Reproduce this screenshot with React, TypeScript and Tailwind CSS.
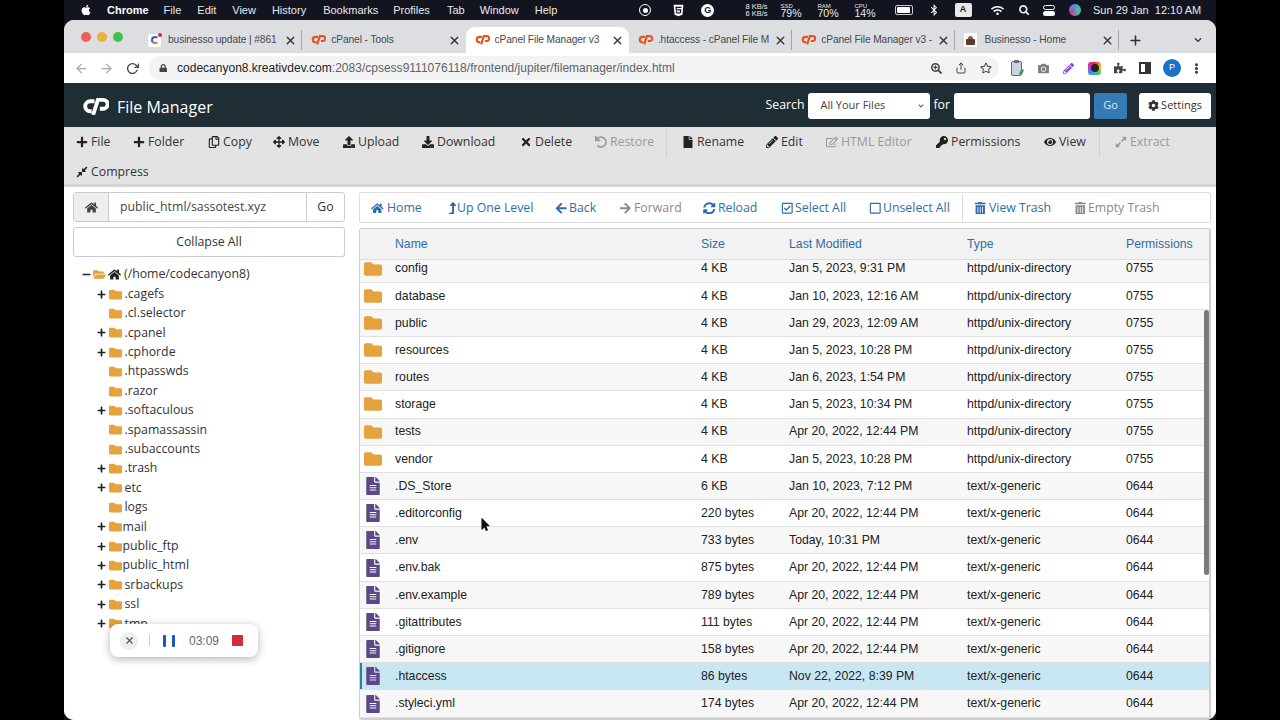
import React from "react";
import {
  FaPlus, FaRegCopy, FaArrowsAlt, FaUpload, FaDownload, FaTimes, FaUndo, FaFile, FaPencilAlt, FaRegEdit, FaKey, FaEye, FaExpandAlt, FaCompressAlt,
  FaHome, FaLevelUpAlt, FaArrowLeft, FaArrowRight, FaSyncAlt, FaRegCheckSquare, FaRegSquare, FaTrashAlt, FaFolder, FaFolderOpen, FaFileAlt, FaCog, FaApple, FaMinus, FaRegStar, FaPuzzlePiece, FaCamera, FaLock, FaBluetoothB, FaWifi, FaSearch, FaEllipsisV, FaChevronDown, FaHtml5, FaMousePointer, FaSearchPlus,
} from "react-icons/fa";
import { FiShare, FiX, FiPlus, FiArrowLeft, FiArrowRight, FiRotateCw } from "react-icons/fi";

const CP = ({ c = "#e5531f", s = 15 }: { c?: string; s?: number }) => (
  <svg width={s} height={(s * 18) / 28} viewBox="0 0 28 18" className="shrink-0">
    <path d="M13 3.4H8.5a5.2 5.2 0 0 0 0 10.4H10" fill="none" stroke={c} strokeWidth="4" />
    <path d="M11.5 17.5 16.5 2H22a4.6 4.6 0 0 1 0 9.2H18.5" fill="none" stroke={c} strokeWidth="4" />
  </svg>
);

const Tab = ({ icon, title, active, sep = true }: { icon: React.ReactNode; title: string; active?: boolean; sep?: boolean }) => (
  <div className={"relative flex h-[26px] w-[163.3px] shrink-0 items-center pl-[9px] pr-[5px] " + (active ? "rounded-t-[9px] bg-white" : "")}>
    <span className="flex w-[20px] shrink-0 items-center">{icon}</span>
    <span className="min-w-0 flex-1 overflow-hidden whitespace-nowrap pr-[4px] text-[10.2px] tracking-[-0.1px] text-[#45484d]">{title}</span>
    <FiX className="shrink-0 text-[13px] text-[#333]" strokeWidth={2.5} />
    {sep && <span className="absolute right-0 top-[3px] h-[20px] w-px bg-[#a4a7ab]" />}
  </div>
);

const tools: [React.ReactNode, string, number, boolean?][] = [
  [<FaPlus />, "File", 57],
  [<FaPlus />, "Folder", 75],
  [<FaRegCopy />, "Copy", 65],
  [<FaArrowsAlt />, "Move", 70],
  [<FaUpload />, "Upload", 79],
  [<FaDownload />, "Download", 98],
  [<FaTimes />, "Delete", 75],
  [<FaUndo />, "Restore", 70, true],
];
const tools2: [React.ReactNode, string, number, boolean?][] = [
  [<FaFile />, "Rename", 84],
  [<FaPencilAlt />, "Edit", 60],
  [<FaRegEdit />, "HTML Editor", 110, true],
  [<FaKey />, "Permissions", 108],
  [<FaEye />, "View", 55],
];

const Tool = ({ i, t, w, off }: { i: React.ReactNode; t: string; w: number; off?: boolean }) => (
  <span style={{ width: w }} className={"flex h-[30px] shrink-0 items-center whitespace-nowrap text-[12.3px] " + (off ? "text-[#9a9a9a]" : "text-[#333]")}>
    <span className={"w-[15px] shrink-0 text-[12px] " + (off ? "text-[#9a9a9a]" : "text-[#222]")}>{i}</span>
    {t}
  </span>
);

const Nav = ({ i, t, off, w, iw }: { i: React.ReactNode; t: string; off?: boolean; w: number; iw: number }) => (
  <span style={{ width: w }} className={"flex shrink-0 items-center whitespace-nowrap text-[12.3px] " + (off ? "text-[#8a8a8a]" : "text-[#2f6da8]")}>
    <span style={{ width: iw }} className="shrink-0 text-[12.5px]">{i}</span>
    {t}
  </span>
);

const tree: [string, boolean, boolean?][] = [
  [".cagefs", true], [".cl.selector", false], [".cpanel", true], [".cphorde", true], [".htpasswds", false], [".razor", false],
  [".softaculous", true], [".spamassassin", false], [".subaccounts", false], [".trash", true], ["etc", true], ["logs", false],
  ["mail", true, true], ["public_ftp", true, true], ["public_html", true, true], ["srbackups", true], ["ssl", true], ["tmp", true],
];

const rows: [string, string, string, boolean][] = [
  ["config", "4 KB", "Jan 5, 2023, 9:31 PM", true],
  ["database", "4 KB", "Jan 10, 2023, 12:16 AM", true],
  ["public", "4 KB", "Jan 29, 2023, 12:09 AM", true],
  ["resources", "4 KB", "Jan 5, 2023, 10:28 PM", true],
  ["routes", "4 KB", "Jan 6, 2023, 1:54 PM", true],
  ["storage", "4 KB", "Jan 5, 2023, 10:34 PM", true],
  ["tests", "4 KB", "Apr 20, 2022, 12:44 PM", true],
  ["vendor", "4 KB", "Jan 5, 2023, 10:28 PM", true],
  [".DS_Store", "6 KB", "Jan 10, 2023, 7:12 PM", false],
  [".editorconfig", "220 bytes", "Apr 20, 2022, 12:44 PM", false],
  [".env", "733 bytes", "Today, 10:31 PM", false],
  [".env.bak", "875 bytes", "Apr 20, 2022, 12:44 PM", false],
  [".env.example", "789 bytes", "Apr 20, 2022, 12:44 PM", false],
  [".gitattributes", "111 bytes", "Apr 20, 2022, 12:44 PM", false],
  [".gitignore", "158 bytes", "Apr 20, 2022, 12:44 PM", false],
  [".htaccess", "86 bytes", "Nov 22, 2022, 8:39 PM", false],
  [".styleci.yml", "174 bytes", "Apr 20, 2022, 12:44 PM", false],
];

const cols = "grid grid-cols-[35px_306px_88px_178px_159px_1fr] items-center";

export default function App() {
  return (
    <div className="h-[720px] w-[1280px] overflow-hidden bg-black font-['Liberation_Sans',sans-serif]">
      <div className="relative mx-auto flex h-[720px] w-[1152px] flex-col overflow-hidden bg-[#12151f]">
        {/* macOS menu bar */}
        <div className="flex h-[20px] shrink-0 items-center text-[11px] text-[#e8e8ea]">
          <FaApple className="ml-[16px] text-[12px] text-white" />
          <span className="ml-[15px] font-bold text-white">Chrome</span>
          <span className="ml-[15px]">File</span>
          <span className="ml-[16px]">Edit</span>
          <span className="ml-[16px]">View</span>
          <span className="ml-[16px]">History</span>
          <span className="ml-[17px]">Bookmarks</span>
          <span className="ml-[15px]">Profiles</span>
          <span className="ml-[17px]">Tab</span>
          <span className="ml-[15px]">Window</span>
          <span className="ml-[16px]">Help</span>
          <span className="ml-[82px] flex h-[12px] w-[12px] items-center justify-center rounded-full border border-white"><span className="h-[5px] w-[5px] rounded-full bg-white" /></span>
          <FaHtml5 className="ml-[21px] text-[13px] text-white" />
          <span className="ml-[16px] flex h-[13px] w-[13px] items-center justify-center rounded-full bg-white text-[9px] font-bold leading-none text-[#141a24]">G</span>
          <span className="ml-[31px] flex flex-col text-[7.5px] leading-[7.5px]"><span>8 KB/s</span><span>6 KB/s</span></span>
          <span className="ml-[13px] flex flex-col text-[10.5px] leading-[9px]"><span className="text-[6px] leading-[6px]">SSD</span><span>79%</span></span>
          <span className="ml-[16px] flex flex-col text-[10.5px] leading-[9px]"><span className="text-[6px] leading-[6px]">RAM</span><span>70%</span></span>
          <span className="ml-[16px] flex flex-col text-[10.5px] leading-[9px]"><span className="text-[6px] leading-[6px]">CPU</span><span>14%</span></span>
          <span className="ml-[19px] flex h-[10px] w-[18px] items-center rounded-[2px] border border-[#ccc] p-[1px]"><span className="h-full w-[13px] rounded-[1px] bg-white" /></span>
          <FaBluetoothB className="ml-[15px] text-[12px] text-white" />
          <span className="ml-[15px] flex h-[14px] w-[17px] items-center justify-center rounded-[2px] bg-[#e8e8e8] text-[9px] font-bold text-[#222]">A</span>
          <FaWifi className="ml-[19px] text-[13px] text-white" />
          <FaSearch className="ml-[15px] text-[10.5px] text-[#eee]" />
          <span className="ml-[14px] flex flex-col gap-[1px]"><span className="h-[5px] w-[12px] rounded-full border border-white" /><span className="h-[5px] w-[12px] rounded-full bg-white" /></span>
          <span className="ml-[14px] h-[12px] w-[12px] rounded-full bg-[conic-gradient(#3aa0e0,#4cc38a,#c63bb0,#3aa0e0)]" />
          <span className="ml-[12px] whitespace-nowrap text-[11px]">Sun 29 Jan&nbsp; 12:10 AM</span>
        </div>

        {/* Browser window */}
        <div className="flex min-h-0 flex-1 flex-col overflow-hidden rounded-[10px] bg-white">
          {/* tab strip */}
          <div className="flex h-[33px] shrink-0 items-end bg-[#dcdee1]">
            <div className="flex h-[26px] w-[75px] shrink-0 items-start gap-[6px] pl-[17px] pt-[5px]">
              <span className="h-[10px] w-[10px] rounded-full bg-[#ec5f56]" />
              <span className="h-[10px] w-[10px] rounded-full bg-[#e8b03c]" />
              <span className="h-[10px] w-[10px] rounded-full bg-[#3fc24e]" />
            </div>
            <Tab
              icon={
                <span className="relative flex h-[13px] w-[13px] items-center justify-center rounded-[2px] bg-white">
                  <span className="h-[8px] w-[8px] rounded-full border-2 border-[#3b5bc4] border-r-transparent border-b-[#e0703c]" />
                  <span className="absolute -right-[1px] -top-[1px] h-[4px] w-[4px] rounded-full bg-[#d4263c]" />
                </span>
              }
              title="businesso update | #861"
            />
            <Tab icon={<CP />} title="cPanel - Tools" sep={false} />
            <Tab icon={<CP />} title="cPanel File Manager v3" active sep={false} />
            <Tab icon={<CP />} title=".htaccess - cPanel File M" />
            <Tab icon={<CP />} title="cPanel File Manager v3 -" />
            <Tab
              icon={
                <span className="flex h-[14px] w-[13px] flex-col items-center justify-center bg-white">
                  <span className="h-[3px] w-[5px] rounded-t-full bg-[#8a5a3a]" />
                  <span className="h-[6px] w-[9px] rounded-[1px] bg-[#5e3a2c]" />
                </span>
              }
              title="Businesso - Home"
            />
            <div className="flex h-[26px] flex-1 items-center">
              <FiPlus className="ml-[9px] text-[15px] text-[#333]" strokeWidth={2.5} />
              <FaChevronDown className="ml-[51px] text-[8px] text-[#333]" />
            </div>
          </div>
          {/* address bar */}
          <div className="flex h-[30px] shrink-0 items-center bg-white">
            <FiArrowLeft className="ml-[10px] text-[15px] text-[#a8a8a8]" />
            <FiArrowRight className="ml-[10px] text-[15px] text-[#a8a8a8]" />
            <FiRotateCw className="ml-[12px] text-[13px] text-[#444]" strokeWidth={2.5} />
            <div className="ml-[10px] flex h-[24px] w-[850px] shrink-0 items-center rounded-full bg-[#f1f3f4] pl-[10px] pr-[7px] text-[12px] tracking-[0.01px] text-[#5f6368]">
              <FaLock className="mr-[9.5px] text-[8.5px] text-[#444]" />
              <span className="text-[#222]">codecanyon8.kreativdev.com</span>:2083/cpsess9111076118/frontend/jupiter/filemanager/index.html
              <span className="ml-auto flex items-center gap-[13px] text-[#444]">
                <FaSearchPlus className="text-[11px]" />
                <FiShare className="text-[12px]" />
                <FaRegStar className="text-[12px]" />
              </span>
            </div>
            <span className="relative ml-[12px] h-[15px] w-[11px] rounded-[2px] border border-[#5f6b78] bg-[#c9d4df]">
              <span className="absolute left-[2px] -top-[2px] h-[3px] w-[5px] rounded-[1px] bg-[#5f6b78]" />
              <span className="absolute -right-[2px] bottom-0 h-[6px] w-[3px] rotate-[25deg] bg-[#3f9a5f]" />
            </span>
            <FaCamera className="ml-[16px] text-[11px] text-[#7f7f7f]" />
            <FaPencilAlt className="ml-[14px] text-[11px] text-[#8f4bd0]" />
            <span className="ml-[14px] flex h-[13px] w-[13px] items-center justify-center rounded-[3px] bg-[conic-gradient(#e23,#fb3,#3c6,#39f,#c3c,#e23)]"><span className="h-[8px] w-[8px] rounded-full bg-[#222]" /></span>
            <FaPuzzlePiece className="ml-[13px] text-[12px] text-[#444]" />
            <span className="ml-[13px] flex h-[12px] w-[12px] justify-end border-2 border-[#333]"><span className="h-full w-[4px] bg-[#333]" /></span>
            <span className="ml-[12px] flex h-[18px] w-[18px] items-center justify-center rounded-full bg-[#1a73c9] text-[9px] text-white">P</span>
            <FaEllipsisV className="ml-[10px] text-[11px] text-[#444]" />
          </div>
          {/* File Manager header */}
          <div className="flex h-[44px] shrink-0 items-center bg-[#1f2d35] font-['Open_Sans',sans-serif] text-white">
            <span className="ml-[18px] mt-[3px]"><CP c="#ffffff" s={27} /></span>
            <span className="ml-[8px] mt-[3px] text-[16px]">File Manager</span>
            <span className="ml-auto text-[12.3px]">Search</span>
            <span className="ml-[4px] mt-[1px] flex h-[26px] w-[122px] items-center justify-between rounded-[3px] bg-white pl-[12px] pr-[6px] text-[11px] text-[#444]">All Your Files<FaChevronDown className="text-[6px] text-[#555]" /></span>
            <span className="ml-[3px] text-[12.3px]">for</span>
            <span className="ml-[4px] mt-[1px] h-[26px] w-[136px] rounded-[3px] bg-white" />
            <span className="ml-[4px] mt-[1px] flex h-[26px] w-[33px] items-center justify-center rounded-[2px] bg-[#337ab7] text-[11px] text-[#dce8f3]">Go</span>
            <span className="ml-[12px] mr-[5px] mt-[1px] flex h-[26px] w-[72px] items-center justify-center gap-[2px] rounded-[3px] bg-white text-[11px] text-[#333]"><FaCog className="text-[11px]" />Settings</span>
          </div>
          {/* Toolbar */}
          <div className="shrink-0 border-b-[3px] border-[#d4d4d4] bg-[#e3e3e3] pl-[12px] font-['Open_Sans',sans-serif]">
            <div className="flex h-[30px] items-center">
              {tools.map(([i, t, w, o]) => <Tool key={t} i={i} t={t} w={w} off={o} />)}
              <span className="ml-[1px] mr-[15px] h-[30px] w-px bg-[#d2d2d2]" />
              {tools2.map(([i, t, w, o]) => <Tool key={t} i={i} t={t} w={w} off={o} />)}
              <span className="mr-[15px] h-[30px] w-px bg-[#d2d2d2]" />
              <Tool i={<FaExpandAlt />} t="Extract" w={60} off />
            </div>
            <div className="flex h-[27px] items-center pt-[3px]">
              <Tool i={<FaCompressAlt />} t="Compress" w={80} />
            </div>
          </div>
          {/* Main */}
          <div className="relative flex min-h-0 flex-1 bg-white font-['Open_Sans',sans-serif]">
            {/* Sidebar */}
            <div className="ml-[9px] flex w-[272px] shrink-0 flex-col pt-[5px]">
              <div className="flex h-[30px] items-stretch overflow-hidden rounded-[3px] border border-[#ccc] text-[12.3px] text-[#444]">
                <span className="flex w-[35px] items-center justify-center border-r border-[#ccc] bg-[#eee] text-[13px] text-[#444]"><FaHome /></span>
                <span className="flex flex-1 items-center pl-[11px]">public_html/sassotest.xyz</span>
                <span className="flex w-[38px] items-center justify-center border-l border-[#ccc] text-[#333]">Go</span>
              </div>
              <div className="mt-[5px] flex h-[30px] items-center justify-center rounded-[3px] border border-[#ccc] text-[12.3px] text-[#333]">Collapse All</div>
              <div className="mt-[8px] text-[12.3px] text-[#333]">
                <div className="flex h-[19.4px] items-center pl-[9px]">
                  <FaMinus className="text-[9px] text-[#222]" />
                  <FaFolderOpen className="ml-[2px] text-[13px] text-[#e6a23c]" />
                  <FaHome className="ml-[2px] text-[13px] text-[#222]" />
                  <span className="ml-[3px]">(/home/codecanyon8)</span>
                </div>
                {tree.map(([n, plus, tight]) => (
                  <div key={n} className="flex h-[19.4px] items-center pl-[24px]">
                    <span className="w-[11px]">{plus && <FaPlus className="text-[9px] text-[#222]" />}</span>
                    <FaFolder className="ml-[1px] text-[13px] text-[#e6a23c]" />
                    <span className={tight ? "ml-[0.5px]" : "ml-[2.5px]"}>{n}</span>
                  </div>
                ))}
              </div>
            </div>
            {/* Right */}
            <div className="ml-[14px] flex min-w-0 flex-1 flex-col pr-[5px] pt-[5px]">
              <div className="flex h-[31px] shrink-0 items-center rounded-[2px] border border-[#ddd] pl-[11px] pt-[1px]">
                <Nav i={<FaHome />} t="Home" w={75} iw={16} />
                <Nav i={<FaLevelUpAlt />} t="Up One Level" w={109} iw={11} />
                <Nav i={<FaArrowLeft />} t="Back" w={64} iw={14} />
                <Nav i={<FaArrowRight />} t="Forward" w={84} iw={15} off />
                <Nav i={<FaSyncAlt />} t="Reload" w={78} iw={15} />
                <Nav i={<FaRegCheckSquare />} t="Select All" w={88} iw={14} />
                <Nav i={<FaRegSquare />} t="Unselect All" w={93} iw={14} />
                <span className="h-[29px] w-px bg-[#ddd]" />
                <span className="w-[11px]" />
                <Nav i={<FaTrashAlt />} t="View Trash" w={100} iw={15} />
                <Nav i={<FaTrashAlt />} t="Empty Trash" w={100} iw={14} off />
              </div>
              <div className="mt-[5px] flex min-h-0 flex-1 flex-col overflow-hidden rounded-[3px] border-b-2 border-l border-r-2 border-t border-[#cfcfcf] font-['Liberation_Sans',sans-serif]">
                <div className={cols + " h-[31px] shrink-0 border-b border-[#ddd] bg-[#f2f2f2] text-[12.25px] text-[#2f6da8]"}>
                  <span /><span>Name</span><span>Size</span><span>Last Modified</span><span>Type</span><span>Permissions</span>
                </div>
                <div className="relative min-h-0 flex-1 overflow-hidden">
                  <div className="-mt-[4.6px]">
                    {rows.map(([n, s, d, dir], idx) => {
                      const hl = n === ".htaccess";
                      return (
                        <div key={n} className={cols + " h-[27.2px] border-b border-[#e0e0e0] text-[12.25px] text-[#222] " + (hl ? "bg-[#c9e6f3] shadow-[inset_2px_0_0_#2f7f9f]" : idx % 2 === 0 ? "bg-[#f7f7f7]" : "bg-white")}>
                          <span className="flex pl-[4px]">
                            {dir ? <FaFolder className="text-[18px] text-[#e6a23c]" /> : <FaFileAlt className="text-[18px] text-[#5c4787]" />}
                          </span>
                          <span>{n}</span><span>{s}</span><span>{d}</span><span>{dir ? "httpd/unix-directory" : "text/x-generic"}</span><span>{dir ? "0755" : "0644"}</span>
                        </div>
                      );
                    })}
                  </div>
                  <span className="absolute right-0 top-[50px] h-[265px] w-[5px] rounded-full bg-[#7a7a7a]" />
                </div>
              </div>
            </div>
            {/* recording widget */}
            <div className="absolute left-[46px] top-[437px] flex h-[33px] w-[148px] items-center rounded-[8px] bg-white font-['Liberation_Sans',sans-serif] shadow-[0_2px_8px_rgba(0,0,0,0.3)]">
              <span className="ml-[10px] flex h-[18px] w-[18px] items-center justify-center rounded-full bg-[#eeeeee] text-[11px] text-[#555]"><FiX strokeWidth={2.5} /></span>
              <span className="ml-[11px] h-[11px] w-px bg-[#cccccc]" />
              <span className="ml-[13px] h-[12px] w-[3px] rounded-[1px] bg-[#1a56c4]" />
              <span className="ml-[6px] h-[12px] w-[3px] rounded-[1px] bg-[#1a56c4]" />
              <span className="ml-[14px] text-[12px] text-[#666]">03:09</span>
              <span className="ml-[13px] h-[11px] w-[11px] rounded-[1px] bg-[#d42a3c]" />
            </div>
            {/* pointer */}
            <FaMousePointer className="absolute left-[415px] top-[331px] text-[13px] text-[#111]" />
          </div>
        </div>
      </div>
    </div>
  );
}
